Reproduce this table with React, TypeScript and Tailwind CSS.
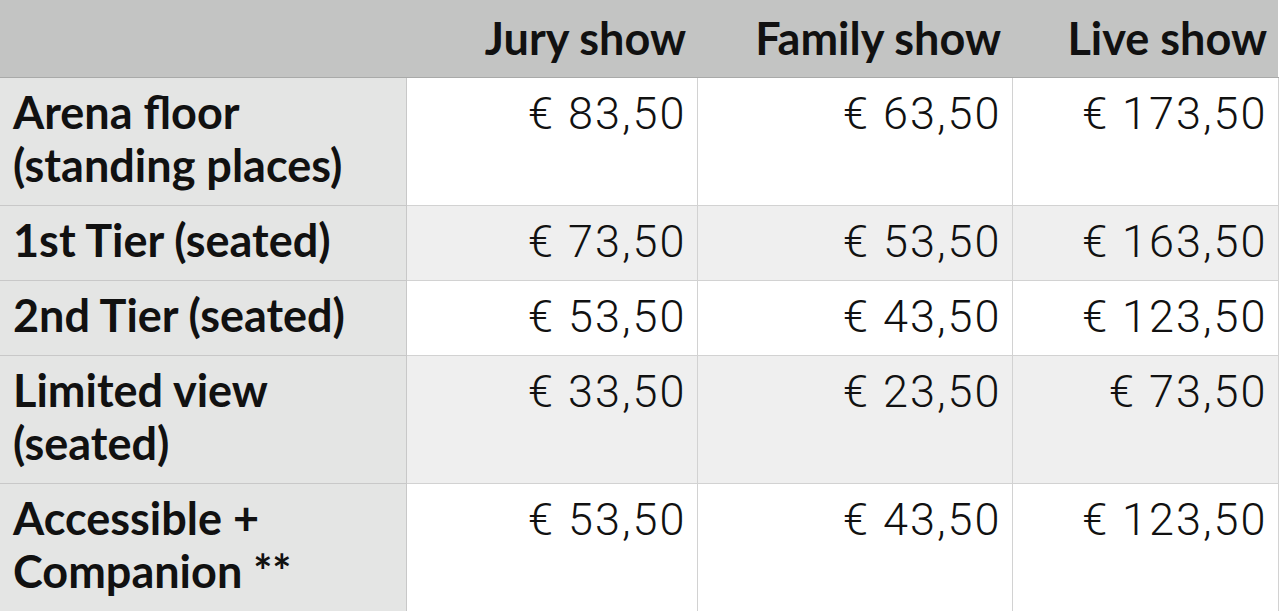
const columns = ["Jury show", "Family show", "Live show"];

const rows: { label: string[]; prices: string[] }[] = [
  { label: ["Arena floor", "(standing places)"], prices: ["€ 83,50", "€ 63,50", "€ 173,50"] },
  { label: ["1st Tier (seated)"], prices: ["€ 73,50", "€ 53,50", "€ 163,50"] },
  { label: ["2nd Tier (seated)"], prices: ["€ 53,50", "€ 43,50", "€ 123,50"] },
  { label: ["Limited view", "(seated)"], prices: ["€ 33,50", "€ 23,50", "€ 73,50"] },
  { label: ["Accessible +", "Companion **"], prices: ["€ 53,50", "€ 43,50", "€ 123,50"] },
];

const App = () => {
  return (
    <div className="w-[1280px] h-[611px] bg-white overflow-hidden">
      <table className="w-[1278px] table-fixed border-collapse text-[#111]">
        <colgroup>
          <col className="w-[406px]" />
          <col className="w-[291px]" />
          <col className="w-[315px]" />
          <col className="w-[266px]" />
        </colgroup>
        <thead>
          <tr className="h-[77px] bg-[#c3c4c3]">
            <th className="border-b border-[#a9aaa9]" />
            {columns.map((c) => (
              <th
                key={c}
                className="border-b border-[#a9aaa9] pr-[11px] text-right align-middle font-['Lato',sans-serif] font-bold text-[45px] leading-[52px]"
              >
                {c}
              </th>
            ))}
          </tr>
        </thead>
        <tbody>
          {rows.map((r, i) => (
            <tr key={i} className={i % 2 === 1 ? "bg-[#efefef]" : "bg-white"}>
              <td className="bg-[#e4e5e4] border border-l-0 border-[#c8c8c8] pl-[13px] pt-[8px] pb-[13px] align-top font-['Lato',sans-serif] font-bold text-[45px] leading-[53px]">
                {r.label.map((l) => (
                  <div key={l}>{l}</div>
                ))}
              </td>
              {r.prices.map((p, j) => (
                <td
                  key={j}
                  className="border border-[#d2d2d2] pr-[10px] pt-[9px] align-top text-right font-['Roboto',sans-serif] font-light text-[45px] leading-[53px] tracking-[2px]"
                >
                  {p}
                </td>
              ))}
            </tr>
          ))}
        </tbody>
      </table>
    </div>
  );
};

export default App;
